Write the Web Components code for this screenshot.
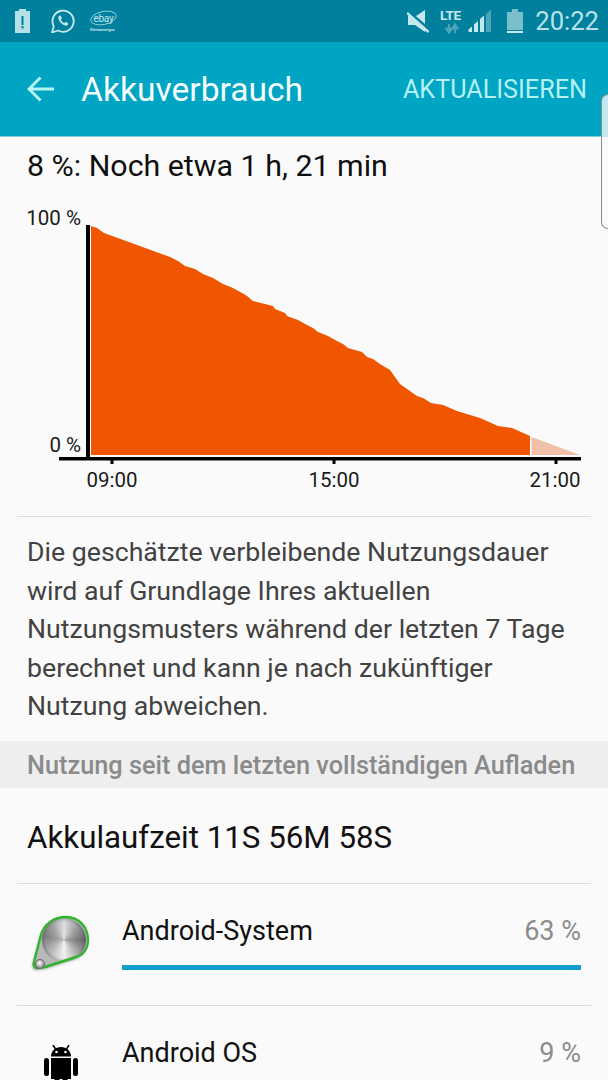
<!DOCTYPE html>
<html lang="de">
<head>
<meta charset="utf-8">
<title>Akkuverbrauch</title>
<style>
  html, body { margin: 0; padding: 0; background: #fafafa; }
  body { width: 608px; height: 1080px; overflow: hidden; font-family: Roboto, sans-serif; position: relative; }
</style>
</head>
<body>
<status-bar></status-bar>
<app-bar title="Akkuverbrauch" action="AKTUALISIEREN"></app-bar>
<battery-page></battery-page>
<edge-handle></edge-handle>

<script>
class StatusBar extends HTMLElement {
  constructor() {
    super();
    this.attachShadow({ mode: "open" });
  }

  connectedCallback() {
    this.shadowRoot.innerHTML = `
      <style>
        :host {
          display: flex;
          align-items: center;
          height: 42px;
          padding: 0 9px 0 15px;
          background: #00809c;
          color: #b9e3ea;
          box-sizing: border-box;
        }
        .left, .right { display: flex; align-items: center; }
        .right { margin-left: auto; }
        .time { font-size: 25.600px; margin-left: 12px; }
        svg { display: block; }
      </style>
      <div class="left">
        <svg width="15" height="24" viewBox="0 0 15 24">
          <path d="M4 0h7v2h4v22H0V2h4z" fill="#b4e0e8"/>
          <rect x="6.500" y="7" width="2" height="9" fill="#00809c"/>
          <rect x="6.500" y="17" width="2" height="2.500" fill="#00809c"/>
        </svg>
        <svg width="24" height="24" viewBox="0 0 24 24" style="margin-left:21px">
          <path d="M1 23.500l1.800-6.200A10.600 10.600 0 1 1 7 21.500z" fill="none" stroke="#c4e8ee" stroke-width="1.800" stroke-linejoin="round"/>
          <path d="M8.600 6.600c-1 .5-1.600 1.700-1.200 3.200.8 3 3.600 5.800 6.600 6.700 1.500.4 2.700-.2 3.200-1.200.2-.5.1-.9-.2-1.100l-2.100-1.100c-.3-.2-.6-.1-.8.2l-.7.9c-1.600-.6-3-2-3.700-3.600l.9-.8c.2-.2.3-.5.2-.8L9.700 6.800c-.2-.4-.6-.4-1.100-.2z" fill="#c4e8ee"/>
        </svg>
        <svg width="27" height="24" viewBox="0 0 27 24" style="margin-left:15px">
          <ellipse cx="13.500" cy="9" rx="13" ry="6.500" transform="rotate(-12 13.500 9)" fill="none" stroke="#c4e8ee" stroke-width=".7"/>
          <text x="3.500" y="13" font-family="Roboto, sans-serif" font-size="10" fill="#c4e8ee" letter-spacing="-.3">ebay</text>
          <text x="0" y="22" font-family="Roboto, sans-serif" font-size="3.900" fill="#c4e8ee" font-weight="700">Kleinanzeigen</text>
        </svg>
      </div>
      <div class="right">
        <svg width="23" height="24" viewBox="0 0 23 24">
          <path d="M18 1L9 7H1v9h7l10 7z" fill="#c4e8ee"/>
          <path d="M0 1.500L22 20.500" stroke="#00809c" stroke-width="3"/>
          <path d="M0 4L21.500 23" stroke="#c4e8ee" stroke-width="2.400"/>
        </svg>
        <svg width="28" height="30" viewBox="0 -3 28 30" style="margin-left:10px">
          <text x="0" y="10.500" font-family="Roboto, sans-serif" font-size="13.500" font-weight="700" letter-spacing="-.3" fill="#c4e8ee">LTE</text>
          <path d="M9 15v5.500M6 19.500L9 24l3-4.500z" stroke="#4da5b8" stroke-width="1.800" fill="#4da5b8" stroke-linejoin="round"/>
          <path d="M15 24v-5.500M12.500 19.500L15 15l3 4.500z" stroke="#4da5b8" stroke-width="1.800" fill="#4da5b8" stroke-linejoin="round"/>
        </svg>
        <svg width="23" height="24" viewBox="0 0 23 24">
          <path d="M.5 23v-2.500L4 17.500V23z" fill="#c4e8ee"/>
          <path d="M6 23v-7.500l4-3.500v11z" fill="#c4e8ee"/>
          <path d="M12 23V10l4-3.500V23z" fill="#c4e8ee"/>
          <path d="M18 23V5l5-4.500V23z" fill="#4da5b8"/>
        </svg>
        <svg width="16" height="24" viewBox="0 0 16 24" style="margin-left:16px">
          <path d="M5 0h6v3h5v18H0V3h5z" fill="#79bfcc"/>
          <rect x="0" y="22" width="16" height="2" fill="#c4e8ee"/>
        </svg>
        <span class="time">20:22</span>
      </div>
    `;
  }
}

class AppBar extends HTMLElement {
  constructor() {
    super();
    this.attachShadow({ mode: "open" });
  }

  connectedCallback() {
    this.shadowRoot.innerHTML = `
      <style>
        :host {
          display: flex;
          align-items: center;
          height: 95px;
          padding: 0 21px 0 27px;
          box-sizing: border-box;
          background: #00a5c4;
          border-bottom: 1px solid #7fd0df;
        }
        .back { display: block; margin-right: 26px; }
        .title { color: #f4fcfd; font-size: 33.600px; }
        .action { margin-left: auto; color: #b5f1f4; font-size: 25.200px; }
      </style>
      <svg class="back" width="28" height="28" viewBox="0 0 28 28">
        <path d="M27 14H2M13.500 2.500L2 14l11.500 11.500" fill="none" stroke="#b5f6f3" stroke-width="3"/>
      </svg>
      <span class="title">${this.getAttribute("title")}</span>
      <span class="action">${this.getAttribute("action")}</span>
    `;
  }
}

class BatteryChart extends HTMLElement {
  constructor() {
    super();
    this.attachShadow({ mode: "open" });
  }

  connectedCallback() {
    // Punkte der Kurve, am Original abgelesen
    const curve = [
      [91, 226], [97, 228], [104, 233], [170, 257], [178, 261], [185, 266], [195, 269],
      [203, 274], [213, 278], [223, 284], [233, 288], [242, 293], [247, 296], [253, 301],
      [273, 306], [275, 309], [285, 313], [287, 316], [298, 320], [307, 325], [313, 328],
      [318, 332], [328, 336], [337, 341], [343, 344], [348, 348], [362, 352], [367, 357],
      [373, 359], [380, 364], [390, 370], [400, 384], [417, 396], [423, 398], [431, 403],
      [443, 405], [457, 411], [480, 418], [498, 426], [512, 428], [530, 436],
    ];
    const points = curve.map((p) => p.join(",")).join(" ");

    this.shadowRoot.innerHTML = `
      <style>
        :host { display: block; height: 328px; }
        svg { display: block; }
        text { font-family: Roboto, sans-serif; font-size: 20.500px; fill: #1a1a1a; }
      </style>
      <svg width="608" height="328" viewBox="0 188 608 328">
        <polygon points="${points} 530,455 91,455" fill="#f05500"/>
        <polygon points="531.500,437 580,455 531.500,455" fill="#f1c0a9"/>
        <rect x="86" y="225" width="4" height="232" fill="#000"/>
        <rect x="59" y="457" width="522" height="3.500" fill="#000"/>
        <rect x="110.500" y="460" width="3" height="4" fill="#000"/>
        <rect x="332.500" y="460" width="3" height="4" fill="#000"/>
        <rect x="554.500" y="460" width="3" height="4" fill="#000"/>
        <text x="81" y="225" text-anchor="end">100 %</text>
        <text x="81" y="452" text-anchor="end">0 %</text>
        <text x="112" y="487" text-anchor="middle">09:00</text>
        <text x="334" y="487" text-anchor="middle">15:00</text>
        <text x="555" y="487" text-anchor="middle">21:00</text>
      </svg>
    `;
  }
}

class UsageRow extends HTMLElement {
  constructor() {
    super();
    this.attachShadow({ mode: "open" });
  }

  connectedCallback() {
    const bar = this.getAttribute("bar");
    this.shadowRoot.innerHTML = `
      <style>
        :host {
          display: grid;
          grid-template-columns: 105px 1fr;
          margin: 0 17px;
          padding: 29px 10px 0 0;
          height: 122px;
          box-sizing: border-box;
          border-top: 1px solid #dcdcdc;
        }
        .icon { display: flex; justify-content: flex-start; padding-left: 9px; }
        .top { display: flex; justify-content: space-between; align-items: baseline; line-height: 35px; padding-top: 1px; }
        .name { font-size: 27px; color: #111; }
        .pct { font-size: 27px; color: #8c8c8c; }
        .track { height: 5px; margin-top: 16px; }
        .fill { height: 100%; background: #0e9fcb; }
      </style>
      <div class="icon"><slot></slot></div>
      <div>
        <div class="top"><span class="name">${this.getAttribute("name")}</span><span class="pct">${this.getAttribute("percent")}</span></div>
        ${bar ? `<div class="track"><div class="fill" style="width:${bar}"></div></div>` : ""}
      </div>
    `;
  }
}

class BatteryPage extends HTMLElement {
  constructor() {
    super();
    this.attachShadow({ mode: "open" });
  }

  connectedCallback() {
    this.shadowRoot.innerHTML = `
      <style>
        :host { display: block; background: #fafafa; }
        .estimate { margin: 0; padding: 7px 27px 0; height: 51px; box-sizing: border-box; font-size: 30.350px; line-height: 44px; color: #0f0f0f; }
        .info {
          margin: 0 17px;
          padding: 16px 10px 15px;
          border-top: 1px solid #dcdcdc;
          font-size: 26.700px;
          line-height: 38.500px;
          color: #424242;
        }
        .header {
          height: 47px;
          line-height: 49px;
          padding-left: 27px;
          background: #eeeeee;
          color: #8a8a8a;
          font-size: 25.300px;
          font-weight: 500;
        }
        .runtime { margin: 0; padding: 0 27px; height: 95px; line-height: 100px; font-size: 31.300px; color: #111; }
        .metal {
          width: 44px;
          height: 44px;
          border-radius: 50%;
          background:
            radial-gradient(circle, rgba(255,255,255,.4) 0, rgba(255,255,255,.1) 40%, transparent 58%, rgba(40,40,40,.45) 80%, rgba(20,20,20,.9) 99%),
            conic-gradient(#dcdcdc 0deg, #969696 50deg, #6c6c6c 90deg, #a6a6a6 130deg, #f0f0f0 180deg, #b4b4b4 230deg, #7e7e7e 280deg, #a0a0a0 320deg, #dcdcdc 360deg);
          filter: blur(.5px);
        }
      </style>
      <p class="estimate">8 %: Noch etwa 1 h, 21 min</p>
      <battery-chart></battery-chart>
      <div class="info">Die geschätzte verbleibende Nutzungsdauer wird auf Grundlage Ihres aktuellen Nutzungsmusters während der letzten 7 Tage berechnet und kann je nach zukünftiger Nutzung abweichen.</div>
      <div class="header">Nutzung seit dem letzten vollständigen Aufladen</div>
      <p class="runtime">Akkulaufzeit 11S 56M 58S</p>
      <usage-row name="Android-System" percent="63 %" bar="100%">
        <svg width="66" height="62" viewBox="0 0 66 62" style="margin-top:1px">
          <defs>
            <filter id="soft" x="-20%" y="-20%" width="140%" height="140%"><feGaussianBlur stdDeviation="1.800"/></filter>
            <radialGradient id="drop" cx=".45" cy=".4" r=".65">
              <stop offset="0" stop-color="#fff"/>
              <stop offset="1" stop-color="#777"/>
            </radialGradient>
          </defs>
          <path d="M11 54C8 54 7 50 8 48L15 21C18 10 28 3 40 3 53 3 62 13 62 26 62 35 57 41 50 43L19 53Z" fill="#444" opacity=".6" filter="url(#soft)" transform="translate(-1 2)"/>
          <path d="M11 54C8 54 7 50 8 48L15 21C18 10 28 3 40 3 53 3 62 13 62 26 62 35 57 41 50 43L19 53Z" fill="#b8b8b8"/>
          <foreignObject x="16" y="4" width="44" height="44">
            <div xmlns="http://www.w3.org/1999/xhtml" class="metal"></div>
          </foreignObject>
          <path d="M11 54C8 54 7 50 8 48L15 21C18 10 28 3 40 3 53 3 62 13 62 26 62 35 57 41 50 43L19 53Z" fill="none" stroke="#2fb52f" stroke-width="2.400" stroke-linejoin="round"/>
          <circle cx="14" cy="50" r="4.500" fill="url(#drop)" stroke="#666" stroke-width="1"/>
        </svg>
      </usage-row>
      <usage-row name="Android OS" percent="9 %">
        <svg width="34" height="44" viewBox="0 0 34 44" style="margin:10px 0 0 18px">
          <path d="M9 0l2.500 4M25 0l-2.500 4" stroke="#000" stroke-width="1.500"/>
          <path d="M7 11.500C7 6 11.500 2 17 2s10 4 10 9.500z" fill="#000"/>
          <circle cx="12.500" cy="7" r="1.300" fill="#fafafa"/>
          <circle cx="21.500" cy="7" r="1.300" fill="#fafafa"/>
          <path d="M7 13h20v21H7z" fill="#000"/>
          <rect x="0" y="13" width="5" height="18" rx="2.500" fill="#000"/>
          <rect x="29" y="13" width="5" height="18" rx="2.500" fill="#000"/>
          <rect x="10.500" y="28" width="5" height="16" rx="2.500" fill="#000"/>
          <rect x="18.500" y="28" width="5" height="16" rx="2.500" fill="#000"/>
        </svg>
      </usage-row>
    `;
  }
}

class EdgeHandle extends HTMLElement {
  constructor() {
    super();
    this.attachShadow({ mode: "open" });
  }

  connectedCallback() {
    this.shadowRoot.innerHTML = `
      <style>
        :host {
          position: absolute;
          right: 0;
          top: 94px;
          width: 7px;
          height: 135px;
          box-sizing: border-box;
          border: 1px solid #7f8f94;
          border-right: 0;
          border-radius: 10px 0 0 10px;
          background: linear-gradient(#c5e8ee 0, #c5e8ee 42px, transparent 42px);
        }
      </style>
    `;
  }
}

customElements.define("status-bar", StatusBar);
customElements.define("app-bar", AppBar);
customElements.define("battery-chart", BatteryChart);
customElements.define("usage-row", UsageRow);
customElements.define("battery-page", BatteryPage);
customElements.define("edge-handle", EdgeHandle);
</script>
</body>
</html>
